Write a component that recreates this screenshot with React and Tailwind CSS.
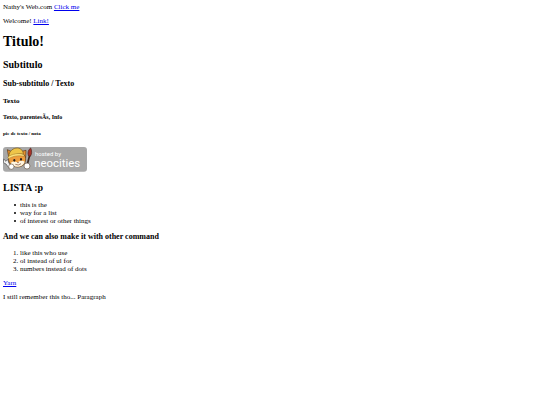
import React from 'react';

const unordered = ['this is the', 'way for a list', 'of interest or other things'];
const ordered = ['like this who use', 'ol instead of ul for', 'numbers instead of dots'];

const NeocitiesBadge = () => (
  <svg viewBox="11 14 252 75" className="w-[84px] h-[25px]" role="img" aria-label="hosted by neocities">
    <rect x="11" y="14" width="252" height="74" rx="9" fill="#a8a8a8" />
    {/* wrench */}
    <path d="M13 50 L12 61 L20 65 L31 80 L38 75 L28 61 L26 51 L20 57 Z" fill="#f1f1f1" stroke="#4a4a4a" strokeWidth="2" />
    {/* brush */}
    <path d="M91 39 L84 66" stroke="#3d2a22" strokeWidth="5" strokeLinecap="round" />
    <path d="M87 40 C84 30 87 22 94 17 C98 25 98 35 93 42 Z" fill="#a83228" stroke="#4b211b" strokeWidth="2" />
    {/* ears and head */}
    <path d="M28 44 L24 22 L41 30 Z" fill="#e79130" stroke="#563516" strokeWidth="2" />
    <path d="M64 28 L80 24 L79 46 Z" fill="#e79130" stroke="#563516" strokeWidth="2" />
    <path d="M28 43 C25 62 37 73 54 74 C71 74 82 62 78 43 C74 30 33 28 28 43 Z" fill="#ee9d3c" stroke="#563516" strokeWidth="2" />
    <path d="M34 62 C42 56 47 57 54 60 C62 54 70 54 76 58 C72 70 63 73 54 73 C44 73 38 70 34 62 Z" fill="#fff5df" />
    {/* helmet */}
    <path d="M28 42 C30 25 42 17 54 17 C66 18 72 26 72 36 C57 33 43 37 29 46 Z" fill="#efc548" stroke="#76561d" strokeWidth="2" />
    <path d="M25 44 C39 34 59 31 75 37 L74 42 C57 38 41 41 28 49 Z" fill="#ffe37a" stroke="#76561d" strokeWidth="1" />
    {/* face */}
    <ellipse cx="45" cy="54" rx="3" ry="4" fill="#2b211b" />
    <ellipse cx="65" cy="51" rx="3" ry="4" fill="#2b211b" />
    <path d="M53 60 L59 59 L56 63 Z" fill="#774029" />
    <path d="M48 66 Q57 71 65 64" fill="none" stroke="#774029" strokeWidth="2" />
    {/* paws */}
    <circle cx="36" cy="73" r="8" fill="#fff" stroke="#6b5a4a" strokeWidth="2" />
    <circle cx="83" cy="71" r="9" fill="#fff" stroke="#6b5a4a" strokeWidth="2" />
    <text x="107" y="41" fontSize="18" fill="#fff" fontFamily="Roboto, sans-serif">hosted by</text>
    <text x="105" y="74" fontSize="34" fill="#fff" fontFamily="Roboto, sans-serif">neocities</text>
  </svg>
);

export default function App() {
  return (
    <main className="bg-white p-[3px] text-[7px] leading-[8px] text-black font-['Liberation_Serif',serif]">
      <p>
        Nathy's Web.com <a href="#" className="text-[#0000ee] underline">Click me</a>
      </p>
      <p className="mt-[6px]">
        Welcome! <a href="#" className="text-[#0000ee] underline">Link!</a>
      </p>

      <h1 className="mt-[9px] text-[14px] leading-[16px] font-bold">Titulo!</h1>
      <h2 className="mt-[9px] text-[10px] leading-[12px] font-bold">Subtitulo</h2>
      <h3 className="mt-[8px] text-[8px] leading-[10px] font-bold">Sub-subtitulo / Texto</h3>
      <h4 className="mt-[8px] font-bold">Texto</h4>
      <h5 className="mt-[8px] text-[6px] leading-[8px] font-bold">Texto, parentesÃs, Info</h5>
      <h6 className="mt-[10px] text-[5px] leading-[6px] font-bold">pie de texto / nota</h6>

      <div className="mt-[10px] flex">
        <NeocitiesBadge />
      </div>

      <h2 className="mt-[10px] text-[10px] leading-[12px] font-bold">LISTA :p</h2>
      <ul className="mt-[7px] pl-[11px]">
        {unordered.map((item) => (
          <li
            key={item}
            className="flex items-center gap-[4px] before:size-[2px] before:rounded-full before:bg-black before:content-['']"
          >
            {item}
          </li>
        ))}
      </ul>

      <h3 className="mt-[7px] text-[8px] leading-[10px] font-bold">And we can also make it with other command</h3>
      <ol className="mt-[7px] list-decimal pl-[17px]">
        {ordered.map((item) => (
          <li key={item}>{item}</li>
        ))}
      </ol>

      <p className="mt-[6px]">
        <a href="#" className="text-[#0000ee] underline">Yarn</a>
      </p>
      <p className="mt-[6px]">I still remember this tho... Paragraph</p>
    </main>
  );
}
